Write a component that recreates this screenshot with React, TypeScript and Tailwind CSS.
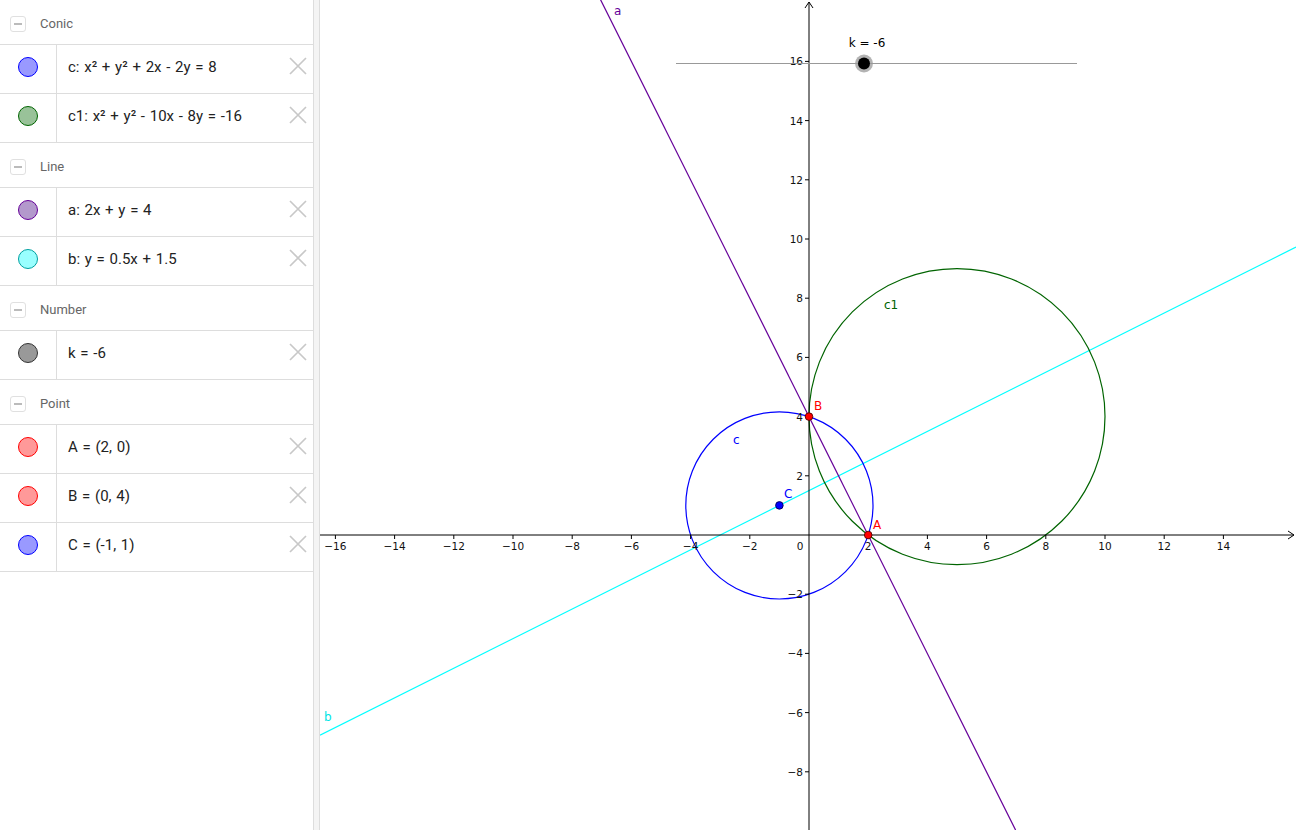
type Item = { text: string; fill: string; stroke: string };
type Group = { name: string; items: Item[] };

const groups: Group[] = [
  {
    name: "Conic",
    items: [
      { text: "c: x² + y² + 2x - 2y = 8", fill: "#9999ff", stroke: "#0000ff" },
      { text: "c1: x² + y² - 10x - 8y = -16", fill: "#99c299", stroke: "#006400" },
    ],
  },
  {
    name: "Line",
    items: [
      { text: "a: 2x + y = 4", fill: "#b399cc", stroke: "#660099" },
      { text: "b: y = 0.5x + 1.5", fill: "#99ffff", stroke: "#00a0a0" },
    ],
  },
  {
    name: "Number",
    items: [{ text: "k = -6", fill: "#999999", stroke: "#333333" }],
  },
  {
    name: "Point",
    items: [
      { text: "A = (2, 0)", fill: "#ff9999", stroke: "#ff0000" },
      { text: "B = (0, 4)", fill: "#ff9999", stroke: "#ff0000" },
      { text: "C = (-1, 1)", fill: "#9999ff", stroke: "#0000ff" },
    ],
  },
];

function GroupHeader({ name }: { name: string }) {
  return (
    <div className="h-[45px] border-b border-[#dddddd] flex items-center pt-[4px]">
      <div className="ml-[10px] w-[16px] h-[16px] rounded-[3px] border border-[#e0e0e0] flex items-center justify-center">
        <div className="w-[8px] h-[1.5px] bg-[#bbbbbb]" />
      </div>
      <span className="ml-[14px] text-[13px] text-[#666666]">{name}</span>
    </div>
  );
}

function Row({ item }: { item: Item }) {
  return (
    <div className="h-[49px] border-b border-[#dddddd] flex items-stretch">
      <div className="w-[57px] border-r border-[#dddddd] flex items-center justify-center shrink-0 pb-[4px]">
        <div
          className="w-[20px] h-[20px] rounded-full border"
          style={{ background: item.fill, borderColor: item.stroke }}
        />
      </div>
      <div className="flex-1 flex items-center pl-[11px] pb-[4px] text-[15px] text-[#222222] [word-spacing:1px]">
        {item.text}
      </div>
      <div className="flex items-start pt-[12px] pr-[6px]">
        <svg width="18" height="18" viewBox="0 0 18 18">
          <path d="M1 1 L17 17 M17 1 L1 17" stroke="#c8c8c8" strokeWidth="1.7" fill="none" />
        </svg>
      </div>
    </div>
  );
}

const S = 29.6;
const OX = 489;
const OY = 535;
const px = (x: number) => OX + x * S;
const py = (y: number) => OY - y * S;
const minus = (n: number) => (n < 0 ? "\u2212" + Math.abs(n) : String(n));

function Graph() {
  const xTicks = [-16, -14, -12, -10, -8, -6, -4, -2, 2, 4, 6, 8, 10, 12, 14];
  const yTicks = [-8, -6, -4, -2, 2, 4, 6, 8, 10, 12, 14, 16];
  return (
    <svg width="976" height="830" className="block" style={{ fontFamily: "'DejaVu Sans', sans-serif" }}>
      {/* line b */}
      <line x1={0} y1={py(0.5 * (-OX / S) + 1.5)} x2={976} y2={py(0.5 * ((976 - OX) / S) + 1.5)} stroke="#00ffff" strokeWidth="1.2" />
      {/* circles */}
      <circle cx={px(-1)} cy={py(1)} r={Math.sqrt(10) * S} fill="none" stroke="#0000ff" strokeWidth="1.2" />
      <circle cx={px(5)} cy={py(4)} r={5 * S} fill="none" stroke="#006400" strokeWidth="1.2" />
      {/* line a */}
      <line x1={px(-7.06)} y1={py(18.12)} x2={px(6.98)} y2={py(-9.97)} stroke="#660099" strokeWidth="1.2" />

      {/* axes */}
      <line x1={0} y1={OY} x2={974} y2={OY} stroke="#000" strokeWidth="1" />
      <polyline points={`${968},${OY - 4} ${974},${OY} ${968},${OY + 4}`} fill="none" stroke="#000" strokeWidth="1" />
      <line x1={OX} y1={2} x2={OX} y2={830} stroke="#000" strokeWidth="1" />
      <polyline points={`${OX - 4},${8} ${OX},${2} ${OX + 4},${8}`} fill="none" stroke="#000" strokeWidth="1" />

      {xTicks.map((t) => (
        <g key={"x" + t}>
          <line x1={px(t)} y1={OY} x2={px(t)} y2={OY + 4} stroke="#000" />
          <text x={px(t)} y={OY + 15} fontSize="10.5" textAnchor="middle" fill="#111">
            {minus(t)}
          </text>
        </g>
      ))}
      <text x={OX - 9} y={OY + 15} fontSize="10.5" textAnchor="middle" fill="#111">0</text>
      {yTicks.map((t) => (
        <g key={"y" + t}>
          <line x1={OX - 4} y1={py(t)} x2={OX} y2={py(t)} stroke="#000" />
          <text x={OX - 6} y={py(t) + 4} fontSize="10.5" textAnchor="end" fill="#111">
            {minus(t)}
          </text>
        </g>
      ))}

      {/* slider */}
      <line x1={356} y1={63.5} x2={757} y2={63.5} stroke="#999" strokeWidth="1" />
      <circle cx={544} cy={63.5} r={9} fill="#9a9a9a" opacity="0.75" />
      <circle cx={544} cy={63.5} r={6} fill="#000" />
      <text x={547} y={47} fontSize="12" textAnchor="middle" fill="#000">k = -6</text>

      {/* points */}
      <circle cx={px(2)} cy={py(0)} r={3.8} fill="#ff0000" stroke="#550000" strokeWidth="0.9" />
      <circle cx={px(0)} cy={py(4)} r={3.8} fill="#ff0000" stroke="#550000" strokeWidth="0.9" />
      <circle cx={px(-1)} cy={py(1)} r={3.8} fill="#0000ff" stroke="#000055" strokeWidth="0.9" />

      {/* labels */}
      <text x={553} y={529} fontSize="12" fill="#ff0000">A</text>
      <text x={494} y={410} fontSize="12" fill="#ff0000">B</text>
      <text x={464} y={498} fontSize="12" fill="#0000ff">C</text>
      <text x={413} y={444} fontSize="12" fill="#0000ff">c</text>
      <text x={564} y={309} fontSize="12" fill="#006400">c1</text>
      <text x={294} y={15} fontSize="12" fill="#660099">a</text>
      <text x={4} y={721} fontSize="12" fill="#00e5e5">b</text>
    </svg>
  );
}

export default function App() {
  return (
    <div className="w-[1296px] h-[830px] flex bg-white overflow-hidden" style={{ fontFamily: "Roboto, 'Liberation Sans', sans-serif" }}>
      <div className="w-[313px] h-full shrink-0">
        {groups.map((g) => (
          <div key={g.name}>
            <GroupHeader name={g.name} />
            {g.items.map((it) => (
              <Row key={it.text} item={it} />
            ))}
          </div>
        ))}
      </div>
      <div className="w-[7px] h-full shrink-0 bg-[#f4f4f4] border-x border-[#dddddd]" />
      <div className="flex-1 h-full overflow-hidden">
        <Graph />
      </div>
    </div>
  );
}
